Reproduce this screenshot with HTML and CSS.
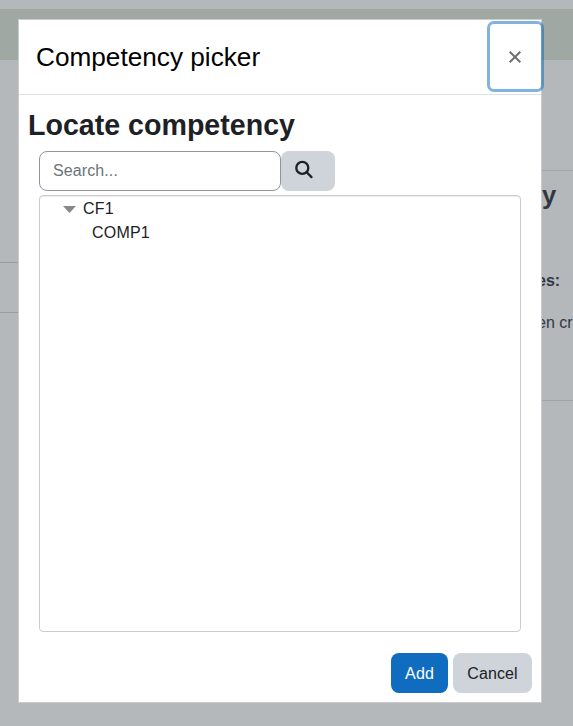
FILE: index.html
```html
<!DOCTYPE html>
<html lang="en">
<head>
<meta charset="utf-8">
<title>Competency picker</title>
<link rel="stylesheet" href="styles.css">
</head>
<body>
<div class="page">
  <div class="banner"></div>
  <div class="columns">
    <div class="side"><div class="side-row"></div></div>
    <div class="content">
      <section class="card">
        <h2>y</h2>
        <h5>es:</h5>
        <p>en cr</p>
      </section>
    </div>
  </div>
</div>
<div class="dialog" role="dialog" aria-labelledby="dialog-title">
  <header class="dialog-header">
    <h3 id="dialog-title">Competency picker</h3>
    <button class="close" aria-label="Close"><svg width="14" height="14" viewBox="0 0 14 14"><path d="M1.7 1.7 12.3 12.3M12.3 1.7 1.7 12.3"/></svg></button>
  </header>
  <div class="dialog-body">
    <h3 class="heading">Locate competency</h3>
    <form class="search">
      <input type="text" placeholder="Search...">
      <button type="button" class="btn btn-search" aria-label="Search"><svg width="20" height="20" viewBox="0 0 20 20"><circle cx="8.3" cy="7.9" r="6"/><path d="m12.7 12.3 4.8 4.8"/></svg></button>
    </form>
    <div class="tree">
      <div class="node"><svg width="13" height="7" viewBox="0 0 13 7"><path d="M0 0h13L6.5 7z"/></svg>CF1</div>
      <div class="node leaf">COMP1</div>
    </div>
    <div class="actions">
      <button class="btn btn-primary">Add</button>
      <button class="btn btn-cancel">Cancel</button>
    </div>
  </div>
</div>
</body>
</html>
```
FILE: styles.css
```css
* { box-sizing: border-box; }
body {
  margin: 0;
  height: 726px;
  overflow: hidden;
  font: 16px/24px "Liberation Sans", Arial, sans-serif;
  color: #1d2125;
  background: #b4b8bb;
}
h2, h3, h5, p { margin: 0; }
.page { padding-top: 9px; color: #33373f; }
.banner { height: 51px; background: #9fa8a2; }
.columns { display: flex; justify-content: space-between; }
.side { width: 18px; padding-top: 202px; }
.side-row { height: 51px; border: solid #989da1; border-width: 1px 0; }
.content { width: 31px; padding-top: 110px; }
.card {
  height: 231px;
  padding-top: 8px;
  border: solid #9fa5ad;
  border-width: 1px 0;
  white-space: nowrap;
}
.card h2 { font-size: 25.6px; line-height: 32px; }
.card h5 { margin-top: 58px; margin-left: -5px; font-size: 16px; line-height: 24px; }
.card p { margin-top: 18px; margin-left: -5px; }

.dialog {
  position: absolute;
  left: 18px;
  top: 19px;
  width: 524px;
  height: 684px;
  border: 1px solid #ccc;
  background: #fff;
}
.dialog-header {
  display: flex;
  justify-content: space-between;
  height: 75px;
  padding-left: 17px;
  border-bottom: 1px solid #dee2e6;
  color: #000;
}
.dialog-header h3 { font-size: 26.2px; font-weight: 400; line-height: 75px; }
.close {
  display: flex;
  align-items: center;
  justify-content: center;
  width: 51px;
  height: 65px;
  margin: 4px 0 0;
  padding: 0 1px 0 0;
  border: 0;
  border-radius: 4px;
  background: none;
  box-shadow: 0 0 0 3px rgba(15, 108, 191, .52);
}
.close svg { fill: none; stroke: #707070; stroke-width: 2; }
.dialog-body { padding: 10px 9px 0; }
.heading { font-size: 28.6px; line-height: 40px; }
.search { display: flex; margin: 6px 0 0 11px; }
.search input {
  width: 242px;
  height: 40px;
  padding: 0 13px;
  border: 1px solid #8f959e;
  border-radius: 8px;
  font: inherit;
  letter-spacing: .1px;
}
.search input::placeholder { color: #6a737b; }
.btn {
  height: 40px;
  padding: 1px 0 0;
  border: 0;
  border-radius: 8px;
  background: #ced4da;
  color: #1d2125;
  font: inherit;
  letter-spacing: .1px;
}
.btn-search { width: 54px; padding: 0 0 3px 13px; text-align: left; }
.btn-search svg { display: block; fill: none; stroke: #1d2125; stroke-width: 2.3; stroke-linecap: round; }
.btn-primary { width: 57px; background: #0f6cbf; color: #fff; }
.btn-cancel { width: 79px; }
.tree {
  width: 482px;
  height: 437px;
  margin: 4px 0 0 11px;
  padding-top: 1px;
  border: 1px solid #ccc;
  border-radius: 4px;
  box-shadow: inset 0 1px 1px rgba(0, 0, 0, .075);
  letter-spacing: .2px;
}
.node { display: flex; align-items: center; gap: 7px; height: 24px; padding-left: 23px; }
.node svg { fill: #888; }
.leaf { padding-left: 52px; }
.actions { display: flex; justify-content: flex-end; gap: 5px; margin-top: 21px; }
```
